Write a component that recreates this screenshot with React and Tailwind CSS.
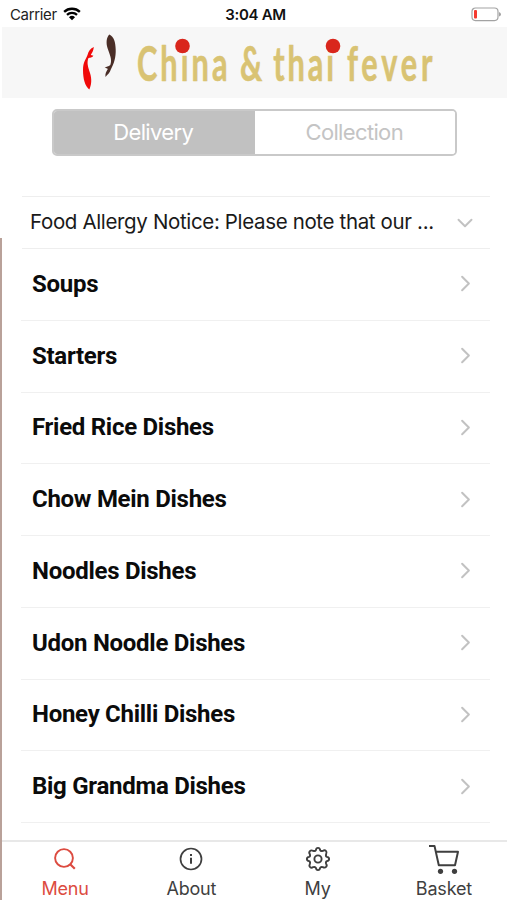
import React from 'react'
import { ChevronDown, ChevronRight } from 'lucide-react'

const categories = [
	'Soups',
	'Starters',
	'Fried Rice Dishes',
	'Chow Mein Dishes',
	'Noodles Dishes',
	'Udon Noodle Dishes',
	'Honey Chilli Dishes',
	'Big Grandma Dishes',
]

const StatusBar = () => {
	return (
		<div className="grid h-[27px] grid-cols-3 items-center pr-[6px] pl-[10px] pt-[1px] text-[15px] leading-none text-[#222]">
			<div className="flex items-center gap-[6px]">
				<span className="tracking-[-0.35px]">Carrier</span>
				<svg width="18" height="14" viewBox="0 0 19 14" fill="none">
					<path d="M1.2 4.8a12 12 0 0 1 16.6 0" stroke="#000" strokeWidth="2.5" />
					<path d="M4.2 8a7.7 7.7 0 0 1 10.6 0" stroke="#000" strokeWidth="2.4" />
					<path d="M9.5 13.6 6.3 10.3a4.7 4.7 0 0 1 6.4 0z" fill="#000" />
				</svg>
			</div>
			<span className="text-center font-semibold tracking-[-0.3px] whitespace-nowrap text-[#111]">
				3:04 AM
			</span>
			<svg className="ml-auto" width="31" height="15" viewBox="0 0 31 15" fill="none">
				<rect x="2" y="1" width="26" height="12.6" rx="3.5" stroke="#a3a3a3" strokeWidth="1.2" />
				<rect x="4" y="3" width="3" height="8.6" rx="1" fill="#f5392f" />
				<path d="M29 5v4.6q2-.7 2-2.3t-2-2.3z" fill="#a3a3a3" />
			</svg>
		</div>
	)
}

const Logo = () => {
	return (
		<svg
			width="360"
			height="66"
			viewBox="78 30 360 66"
			className="font-['Lato',sans-serif] text-[48px] font-bold"
		>
			{/* koi pair */}
			<path
				d="M93.800 47C90.500 48.500 88.500 51 87.500 55C86 59 83 62 83 70C83 79 85 86 89.300 89.500C91.500 85 92 79 90 73C88 67 86.700 63 88.300 58.300C90 57 92 58.500 93.300 55.500C92 55.800 91.300 55.200 90.800 54.800C92.500 52.500 93.500 50.500 93.800 47Z"
				fill="#f00a0a"
			/>
			<path
				d="M109.300 34.500C106.300 37.500 106 43 107.500 48C109.500 54.500 112.500 59 110.300 65C108.500 67 106.500 65.800 104.700 68C106 68.200 107.200 68.200 107.800 69C106.200 71.500 105 74 105.500 77C107.300 74.500 110 73 110.800 69.500C114 64 116 57 115.700 49.500C115.500 42 114 36.500 109.300 34.500Z"
				fill="#4a2e27"
			/>
			<g transform="scale(0.640 1)" fill="#d9c373" stroke="#d9c373" strokeWidth="0.600">
				<text x="214" y="81" className="tracking-[4.800px]">China</text>
				<text x="375" y="81">&amp;</text>
				<text x="427" y="81" className="tracking-[4.500px]">thai</text>
				<text x="542" y="81" className="tracking-[6px]">fever</text>
			</g>
			<circle cx="182.500" cy="46" r="7.300" fill="#d9261c" />
			<circle cx="333" cy="46" r="7.300" fill="#d9261c" />
		</svg>
	)
}

const OrderSwitch = () => {
	return (
		<div className="mt-[11px] ml-[52px] grid h-[47px] w-[405px] grid-cols-2 overflow-hidden rounded-[5px] border-2 border-[#c9c9c9] text-[22px] tracking-[-0.65px]">
			<button className="bg-[#c1c1c1] pr-[2px] text-white">Delivery</button>
			<button className="bg-white pr-[1px] text-[#c4c4c4]">Collection</button>
		</div>
	)
}

const CategoryRow = ({ name }) => {
	return (
		<li className="flex h-[71.750px] items-center justify-between border-b border-[#f0f0f0] pr-[11px] pb-px pl-[11px]">
			<span className="font-['Roboto',sans-serif] text-[24px] font-bold tracking-[-0.28px] text-[#0b0b0b]">
				{name}
			</span>
			<ChevronRight size={27} strokeWidth={1.8} color="#c2c2c2" />
		</li>
	)
}

const Tab = ({ label, active, children }) => {
	return (
		<button
			className={
				active
					? 'flex flex-col items-center text-[#dc4b40]'
					: 'flex flex-col items-center text-[#3f3f3f]'
			}
		>
			<span className="flex h-[34px] items-center">{children}</span>
			<span className="text-[18px] leading-[25px] tracking-[-0.2px]">{label}</span>
		</button>
	)
}

const TabBar = () => {
	return (
		<nav className="ml-[2px] grid h-[60px] grid-cols-4 border-t-2 border-[#e8e8e8] bg-white">
			<Tab label="Menu" active>
				<svg width="24" height="24" viewBox="0 0 24 24" fill="none" stroke="currentColor" strokeWidth="1.900">
					<circle cx="11" cy="11" r="8.900" />
					<path d="m17.200 17.200 4.600 4.600" strokeWidth="2.200" />
				</svg>
			</Tab>
			<Tab label="About">
				<svg width="24" height="24" viewBox="0 0 24 24" fill="none" stroke="currentColor" strokeWidth="1.700">
					<circle cx="12" cy="12" r="10.500" />
					<path d="M12 10.800v6" strokeWidth="2" />
					<path d="M12 7v2" strokeWidth="2" />
				</svg>
			</Tab>
			<Tab label="My">
				<svg width="26" height="26" viewBox="0 0 26 26" fill="none" stroke="currentColor" strokeWidth="1.900" strokeLinejoin="round">
					<circle cx="13" cy="13" r="3.600" />
					<path d="M10.900 4.100Q11.200 1.900 13 1.900T15.100 4.100Q15.700 5.500 17.800 4.900 19.600 3.600 20.900 4.900T21.100 8.200Q20.500 10.300 21.900 10.900 24.100 11.200 24.100 13T21.900 15.100Q20.500 15.700 21.100 17.800 22.400 19.600 21.100 20.900T17.800 21.100Q15.700 20.500 15.100 21.900 14.800 24.100 13 24.100T10.900 21.900Q10.300 20.500 8.200 21.100 6.400 22.400 5.100 21.100T4.900 17.800Q5.500 15.700 4.100 15.100 1.900 14.800 1.900 13T4.100 10.900Q5.500 10.300 4.900 8.200 3.600 6.400 4.900 5.100T8.200 4.900Q10.300 5.500 10.900 4.100z" />
				</svg>
			</Tab>
			<Tab label="Basket">
				<svg width="32" height="32" viewBox="0 0 32 32" fill="none" stroke="currentColor" strokeWidth="2">
					<path d="M1 2.900h5.500l4.300 19.400H27L30 8.800H8" strokeLinejoin="round" />
					<circle cx="12.500" cy="28.300" r="2.600" fill="currentColor" stroke="none" />
					<circle cx="26.500" cy="28.300" r="2.600" fill="currentColor" stroke="none" />
				</svg>
			</Tab>
		</nav>
	)
}

const App = () => {
	return (
		<div className="flex h-[900px] w-[507px] flex-col overflow-hidden bg-white font-['Inter',sans-serif]">
			<StatusBar />
			<header className="ml-[2px] flex h-[71px] items-center bg-[#f7f7f7] pl-[76px]">
				<Logo />
			</header>
			<OrderSwitch />
			<main className="mt-[40px] flex flex-1 flex-col">
				<div className="ml-[22px] flex h-[53px] w-[468px] items-center justify-between border-y border-[#eee] pr-[12px] pl-[8px]">
					<p className="text-[20.500px] tracking-[-0.350px] whitespace-nowrap text-[#1a1a1a]">
						Food Allergy Notice: Please note that our ...
					</p>
					<ChevronDown size={26} strokeWidth={1.8} color="#c2c2c2" />
				</div>
				<ul className="ml-[21px] w-[469px]">
					{categories.map((name) => (
						<CategoryRow key={name} name={name} />
					))}
				</ul>
			</main>
			<TabBar />
			{/* strip of the page behind, showing at the left edge */}
			<div className="absolute top-[238px] left-0 h-[662px] w-[2px] bg-[#b9a199]" />
		</div>
	)
}

export default App
